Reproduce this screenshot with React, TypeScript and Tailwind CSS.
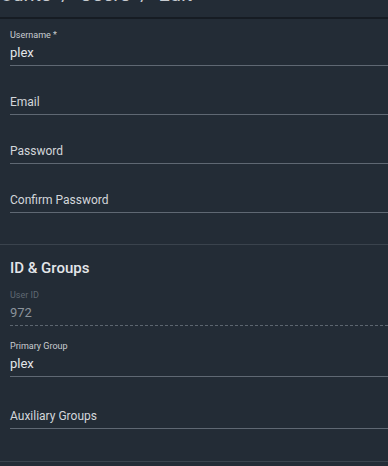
import React from 'react';

type FieldProps = {
  label: string;
  value?: string;
  floating?: boolean;
  disabled?: boolean;
  height?: string;
};

function Field({ label, value, floating = false, disabled = false, height = 'h-[49px]' }: FieldProps) {
  return (
    <div
      className={`${height} flex flex-col justify-end pb-[4px] border-b ${
        disabled ? 'border-dashed border-[#5d6670]' : 'border-[#5f6873]'
      }`}
    >
      {floating ? (
        <>
          <span
            className={`text-[9px] leading-[11px] mb-[4px] ${
              disabled ? 'text-[#5f6872]' : 'text-[#c9cdd1]'
            }`}
          >
            {label}
          </span>
          <span
            className={`text-[13px] leading-[16px] ${disabled ? 'text-[#8b939b]' : 'text-[#e3e6e9]'}`}
          >
            {value}
          </span>
        </>
      ) : (
        <span className="text-[12px] leading-[16px] text-[#d3d7db]">{label}</span>
      )}
    </div>
  );
}

export default function App() {
  return (
    <div
      className="w-[388px] h-[466px] overflow-hidden bg-[#232c36]"
      style={{ fontFamily: 'Roboto, "Liberation Sans", sans-serif' }}
    >
      {/* Breadcrumb, scrolled mostly out of view */}
      <div className="h-[19px] overflow-hidden border-b-2 border-[#161c23]">
        <div className="-mt-[16px] -ml-[33px] whitespace-nowrap text-[20px] leading-[20px] text-[#c7cbd0]">
          Accounts&nbsp;&nbsp;/&nbsp;&nbsp;Users&nbsp;&nbsp;/&nbsp;&nbsp;Edit
        </div>
      </div>

      {/* Identification */}
      <section className="pl-[10px] pb-[31px] border-b border-[#3a434d]">
        <Field label="Username *" value="plex" floating height="h-[47px]" />
        <Field label="Email" />
        <Field label="Password" />
        <Field label="Confirm Password" />
      </section>

      {/* ID & Groups */}
      <section className="pl-[10px] pt-[14px] pb-[32px] border-b border-[#3a434d]">
        <h2 className="text-[15px] leading-[19px] font-medium text-[#e3e6e9]">ID &amp; Groups</h2>
        <Field label="User ID" value="972" floating disabled height="h-[48px]" />
        <Field label="Primary Group" value="plex" floating height="h-[51px]" />
        <Field label="Auxiliary Groups" height="h-[52px]" />
      </section>
    </div>
  );
}
